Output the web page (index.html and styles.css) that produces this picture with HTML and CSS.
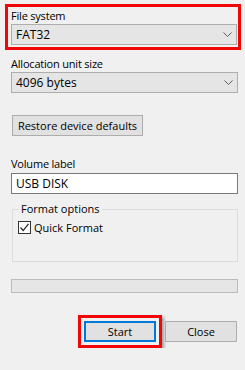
FILE: index.html
```html
<!DOCTYPE html>
<html lang="en">
<head>
    <meta charset="UTF-8">
    <title>Format USB DISK</title>
    <link rel="stylesheet" href="styles.css">
</head>
<body>
    <div class="dialog">
        <div class="highlight fs-box">
            <div class="label">File system</div>
            <div class="combo">
                <span>FAT32</span>
                <svg class="chevron" width="9" height="5" viewBox="0 0 9 5"><path d="M0.5 0.5 L4.5 4.5 L8.5 0.5" fill="none" stroke="#606060" stroke-width="1"/></svg>
            </div>
        </div>

        <div class="label alloc-label">Allocation unit size</div>
        <div class="combo alloc-combo">
            <span>4096 bytes</span>
            <svg class="chevron" width="9" height="5" viewBox="0 0 9 5"><path d="M0.5 0.5 L4.5 4.5 L8.5 0.5" fill="none" stroke="#606060" stroke-width="1"/></svg>
        </div>

        <button class="btn restore">Restore device defaults</button>

        <div class="label volume-label">Volume label</div>
        <div class="textbox">USB DISK</div>

        <fieldset class="group">
            <legend>Format options</legend>
            <div class="check-row">
                <span class="checkbox">
                    <svg width="11" height="11" viewBox="0 0 11 11"><path d="M1.5 5.5 L4.2 8.5 L9.5 1.8" fill="none" stroke="#222" stroke-width="1.2"/></svg>
                </span>
                <span>Quick Format</span>
            </div>
        </fieldset>

        <div class="progress"></div>

        <div class="actions">
            <div class="highlight start-box">
                <button class="btn start">Start</button>
            </div>
            <button class="btn close">Close</button>
        </div>
    </div>
</body>
</html>
```

FILE: styles.css
```css
body {
    margin: 0;
    background-color: #f0f0f0;
    font-family: 'Open Sans', 'Noto Sans', sans-serif;
    font-size: 11px;
    color: #000;
}
.dialog {
    display: flex;
    flex-direction: column;
    padding: 4px 4px 0 5px;
    width: 236px;
}
.highlight {
    border: 3px solid #f20505;
}
.fs-box {
    padding: 0 0 2px 3px;
    display: flex;
    flex-direction: column;
}
.label {
    line-height: 16px;
    height: 16px;
    letter-spacing: -0.2px;
}
.fs-box .label {
    margin-top: 1px;
    margin-bottom: 0;
}
.combo {
    display: flex;
    align-items: center;
    justify-content: space-between;
    height: 19px;
    border: 1px solid #adadad;
    background-color: #e5e5e5;
    padding: 0 4px 0 4px;
    font-size: 12px;
}
.fs-box .combo {
    margin-right: 1px;
}
.chevron {
    display: block;
}
.alloc-label {
    margin: 6px 0 0 6px;
}
.alloc-combo {
    margin: 0 3px 0 6px;
}
.btn {
    font-family: inherit;
    font-size: 11px;
    background-color: #e1e1e1;
    border: 1px solid #adadad;
    height: 21px;
    padding: 0;
    color: #000;
}
.restore {
    margin: 22px 0 0 7px;
    width: 131px;
}
.volume-label {
    margin: 20px 0 1px 6px;
}
.textbox {
    margin: 0 3px 0 6px;
    height: 19px;
    line-height: 19px;
    border: 1px solid #7a7a7a;
    background-color: #fff;
    padding: 0 4px;
    font-size: 12px;
}
.group {
    margin: 8px 3px 0 7px;
    padding: 4px 0 0 5px;
    border: 1px solid #dcdcdc;
    height: 54px;
    min-width: 0;
}
.group legend {
    padding: 0 2px;
    margin-left: 1px;
    font-size: 11px;
    line-height: 14px;
}
.check-row {
    display: flex;
    align-items: center;
    gap: 3px;
    font-size: 11px;
}
.checkbox {
    width: 11px;
    height: 11px;
    border: 1px solid #333;
    background-color: #fff;
    display: flex;
}
.progress {
    margin: 17px 3px 0 6px;
    height: 12px;
    border: 1px solid #bcbcbc;
    background-color: #e6e6e6;
}
.actions {
    display: flex;
    align-items: center;
    margin: 22px 0 0 73px;
}
.start-box {
    padding: 3px;
    box-shadow: 2px 2px 3px rgba(0, 0, 0, 0.35);
}
.start {
    width: 72px;
    border: 1px solid #0078d7;
    box-shadow: inset 0 0 0 1px #0078d7;
}
.close {
    width: 72px;
    margin-left: 3px;
}
```
